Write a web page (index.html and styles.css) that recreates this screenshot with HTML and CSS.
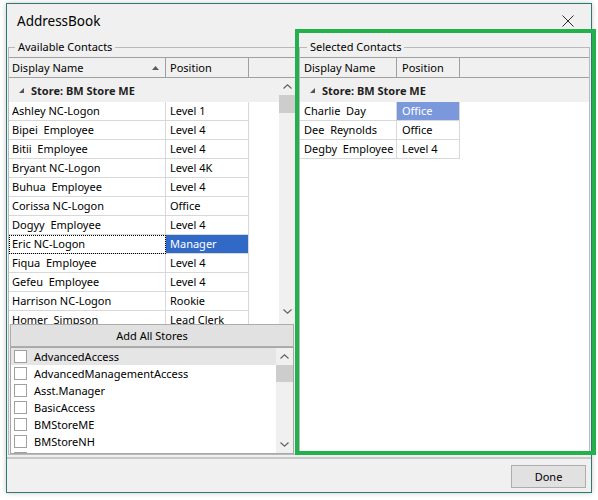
FILE: index.html
```
<!DOCTYPE html>
<html>
<head>
<meta charset="utf-8">
<link rel="stylesheet" href="styles.css">
</head>
<body>
<div class="window">
  <div class="titlebar">
    <span class="title">AddressBook</span>
    <svg class="close" width="12" height="12" viewBox="0 0 12 12"><path d="M0.5 0.5 L11.5 11.5 M11.5 0.5 L0.5 11.5" stroke="#2b2b2b" stroke-width="1" fill="none"/></svg>
  </div>
  <div class="main">
    <div class="group gleft">
      <div class="legend lleg">Available Contacts</div>
      <div class="grid lgrid">
        <div class="ghead">
          <div class="hc lc1"><span>Display Name</span><svg class="sort" width="7" height="4" viewBox="0 0 7 4"><polygon points="0,4 3.5,0 7,4" fill="#5a5a5a"/></svg></div>
          <div class="hc lc2">Position</div>
          <div class="hrest"></div>
        </div>
        <div class="gbody">
          <div class="rows">
            <div class="grp"><svg class="tri" width="5" height="5" viewBox="0 0 5 5"><polygon points="5,0 5,5 0,5" fill="#555"/></svg>Store: BM Store ME</div>
            <div class="row"><div class="cell lc1">Ashley NC-Logon</div><div class="cell lc2">Level 1</div></div>
            <div class="row"><div class="cell lc1">Bipei  Employee</div><div class="cell lc2">Level 4</div></div>
            <div class="row"><div class="cell lc1">Bitii  Employee</div><div class="cell lc2">Level 4</div></div>
            <div class="row"><div class="cell lc1">Bryant NC-Logon</div><div class="cell lc2">Level 4K</div></div>
            <div class="row"><div class="cell lc1">Buhua  Employee</div><div class="cell lc2">Level 4</div></div>
            <div class="row"><div class="cell lc1">Corissa NC-Logon</div><div class="cell lc2">Office</div></div>
            <div class="row"><div class="cell lc1">Dogyy  Employee</div><div class="cell lc2">Level 4</div></div>
            <div class="row"><div class="cell lc1 focus">Eric NC-Logon</div><div class="cell lc2 sel">Manager</div></div>
            <div class="row"><div class="cell lc1">Fiqua  Employee</div><div class="cell lc2">Level 4</div></div>
            <div class="row"><div class="cell lc1">Gefeu  Employee</div><div class="cell lc2">Level 4</div></div>
            <div class="row"><div class="cell lc1">Harrison NC-Logon</div><div class="cell lc2">Rookie</div></div>
            <div class="row"><div class="cell lc1">Homer  Simpson</div><div class="cell lc2">Lead Clerk</div></div>
          </div>
          <div class="vscroll lscroll">
            <div class="sb-btn"><svg width="9" height="5" viewBox="0 0 9 5"><polyline points="0.5,4.5 4.5,0.8 8.5,4.5" fill="none" stroke="#606060" stroke-width="1.1"/></svg></div>
            <div class="thumb"></div>
            <div class="sb-space"></div>
            <div class="sb-btn"><svg width="9" height="5" viewBox="0 0 9 5"><polyline points="0.5,0.5 4.5,4.2 8.5,0.5" fill="none" stroke="#606060" stroke-width="1.1"/></svg></div>
          </div>
        </div>
      </div>
      <button class="addall">Add All Stores</button>
      <div class="clist">
        <div class="items">
          <div class="item hl"><span class="cb"></span>AdvancedAccess</div>
          <div class="item"><span class="cb"></span>AdvancedManagementAccess</div>
          <div class="item"><span class="cb"></span>Asst.Manager</div>
          <div class="item"><span class="cb"></span>BasicAccess</div>
          <div class="item"><span class="cb"></span>BMStoreME</div>
          <div class="item"><span class="cb"></span>BMStoreNH</div>
          <div class="item"><span class="cb"></span>BMStoreNY</div>
        </div>
        <div class="vscroll cscroll">
          <div class="sb-btn"><svg width="9" height="5" viewBox="0 0 9 5"><polyline points="0.5,4.5 4.5,0.8 8.5,4.5" fill="none" stroke="#606060" stroke-width="1.1"/></svg></div>
          <div class="thumb"></div>
          <div class="sb-space"></div>
          <div class="sb-btn"><svg width="9" height="5" viewBox="0 0 9 5"><polyline points="0.5,0.5 4.5,4.2 8.5,0.5" fill="none" stroke="#606060" stroke-width="1.1"/></svg></div>
        </div>
      </div>
    </div>
    <div class="group gright">
      <div class="legend rleg">Selected Contacts</div>
      <div class="grid rgrid">
        <div class="ghead">
          <div class="hc rc1">Display Name</div>
          <div class="hc rc2">Position</div>
          <div class="hrest"></div>
        </div>
        <div class="gbody">
          <div class="rows">
            <div class="grp"><svg class="tri" width="5" height="5" viewBox="0 0 5 5"><polygon points="5,0 5,5 0,5" fill="#555"/></svg>Store: BM Store ME</div>
            <div class="row"><div class="cell rc1">Charlie  Day</div><div class="cell rc2 sel2">Office</div></div>
            <div class="row"><div class="cell rc1">Dee  Reynolds</div><div class="cell rc2">Office</div></div>
            <div class="row"><div class="cell rc1">Degby  Employee</div><div class="cell rc2">Level 4</div></div>
          </div>
        </div>
      </div>
    </div>
  </div>
  <div class="sep"></div>
  <div class="footer"><button class="done">Done</button></div>
</div>
<div class="highlight"></div>
</body>
</html>
```
FILE: styles.css
```
body {
  margin: 0;
  padding: 3px 0 0 6px;
  box-sizing: border-box;
  width: 598px;
  height: 500px;
  overflow: hidden;
  position: relative;
  background: #fff;
  font-family: "Noto Sans", "Open Sans", sans-serif;
  font-size: 11px;
  color: #000;
}
.window {
  box-sizing: border-box;
  width: 586px;
  height: 490px;
  border: 1px solid #2b7a74;
  background: #f0f0f0;
  display: flex;
  flex-direction: column;
  box-shadow: 0 0 5px rgba(0, 0, 0, 0.22);
}
.titlebar {
  box-sizing: border-box;
  height: 26px;
  flex: none;
  display: flex;
  align-items: flex-start;
  padding: 8px 0 0 10px;
  font-size: 13.5px;
  line-height: 18px;
}
.close {
  margin: 3px 17px 0 auto;
}
.main {
  display: flex;
  height: 427px;
  flex: none;
}
.group {
  box-sizing: border-box;
  margin-top: 17px;
  height: 408px;
  border: 1px solid #b9b9b9;
}
.gleft {
  margin-left: 1px;
  width: 288px;
  border-right: none;
}
.gright {
  margin-left: 3px;
  width: 291px;
}
.legend {
  display: block;
  width: max-content;
  margin-top: -9px;
  padding: 0 3px;
  height: 16px;
  line-height: 16px;
  background: #f0f0f0;
}
.lleg { margin-left: 6px; }
.rleg { margin-left: 7px; }
.grid {
  margin-top: 2px;
  display: flex;
  flex-direction: column;
  overflow: hidden;
}
.lgrid { width: 287px; height: 267px; }
.rgrid { width: 289px; height: 397px; }
.ghead {
  box-sizing: border-box;
  display: flex;
  height: 21px;
  flex: none;
  border-top: 1px solid #a0a0a0;
  border-bottom: 1px solid #a0a0a0;
}
.hc {
  box-sizing: border-box;
  border-right: 1px solid #a0a0a0;
  line-height: 19px;
  display: flex;
  align-items: center;
  justify-content: space-between;
  padding-left: 3px;
  white-space: nowrap;
}
.hrest { flex: 1; }
.sort { margin-right: 6px; }
.lc1 { width: 157px; flex: none; }
.lc2 { width: 83px; flex: none; padding-left: 4px; }
.rc1 { width: 97px; flex: none; padding-left: 4px; }
.rc2 { width: 63px; flex: none; padding-left: 5px; }
.gbody {
  flex: 1;
  display: flex;
  min-height: 0;
}
.rows {
  flex: 1;
  background: #fff;
  overflow: hidden;
}
.grp {
  box-sizing: border-box;
  height: 24px;
  background: #f0f0f0;
  display: flex;
  align-items: center;
  padding-left: 10px;
  font-weight: bold;
  color: #1e1e1e;
  white-space: nowrap;
}
.tri { margin-right: 7px; flex: none; }
.row {
  display: flex;
  height: 19px;
}
.cell {
  box-sizing: border-box;
  border-right: 1px solid #d8d8d8;
  border-bottom: 1px solid #d8d8d8;
  line-height: 18px;
  white-space: pre;
  overflow: hidden;
}
.cell.lc1 { padding-left: 3px; }
.focus {
  outline: 1px dotted #000;
  outline-offset: -1px;
}
.sel { background: #3169c6; color: #fff; }
.sel2 { background: #7b98dc; color: #fff; }
.vscroll {
  width: 17px;
  flex: none;
  background: #f0f0f0;
  display: flex;
  flex-direction: column;
}
.lscroll { padding-bottom: 4px; box-sizing: border-box; }
.sb-btn {
  height: 17px;
  flex: none;
  display: flex;
  align-items: center;
  justify-content: center;
}
.thumb {
  height: 17px;
  flex: none;
  background: #cdcdcd;
}
.lscroll .thumb { height: 18px; }
.sb-space { flex: 1; }
.addall {
  box-sizing: border-box;
  display: block;
  margin: 0 0 0 1px;
  width: 284px;
  height: 23px;
  padding: 0;
  border: 1px solid #adadad;
  background: #e1e1e1;
  font: inherit;
  color: #000;
}
.clist {
  box-sizing: border-box;
  margin-left: 1px;
  width: 284px;
  height: 107px;
  border: 1px solid #a8a8a8;
  background: #fff;
  display: flex;
}
.items {
  flex: 1;
  overflow: hidden;
}
.item {
  box-sizing: border-box;
  height: 17px;
  display: flex;
  align-items: center;
  padding-left: 3px;
  white-space: nowrap;
}
.item.hl { background: #e5e5e5; }
.cb {
  box-sizing: border-box;
  width: 13px;
  height: 13px;
  border: 1px solid #a0a0a0;
  background: #fff;
  margin-right: 7px;
  flex: none;
}
.sep {
  height: 2px;
  flex: none;
  background: #c8c8c8;
}
.footer {
  box-sizing: border-box;
  height: 33px;
  flex: none;
  display: flex;
  justify-content: flex-end;
  align-items: flex-start;
  padding: 6px 5px 0 0;
}
.done {
  box-sizing: border-box;
  width: 75px;
  height: 23px;
  padding: 0;
  border: 1px solid #adadad;
  background: #e1e1e1;
  font: inherit;
  color: #000;
}
.highlight {
  position: absolute;
  left: 295px;
  top: 29px;
  width: 301px;
  height: 426px;
  box-sizing: border-box;
  border: 4px solid #22b14c;
}
```
